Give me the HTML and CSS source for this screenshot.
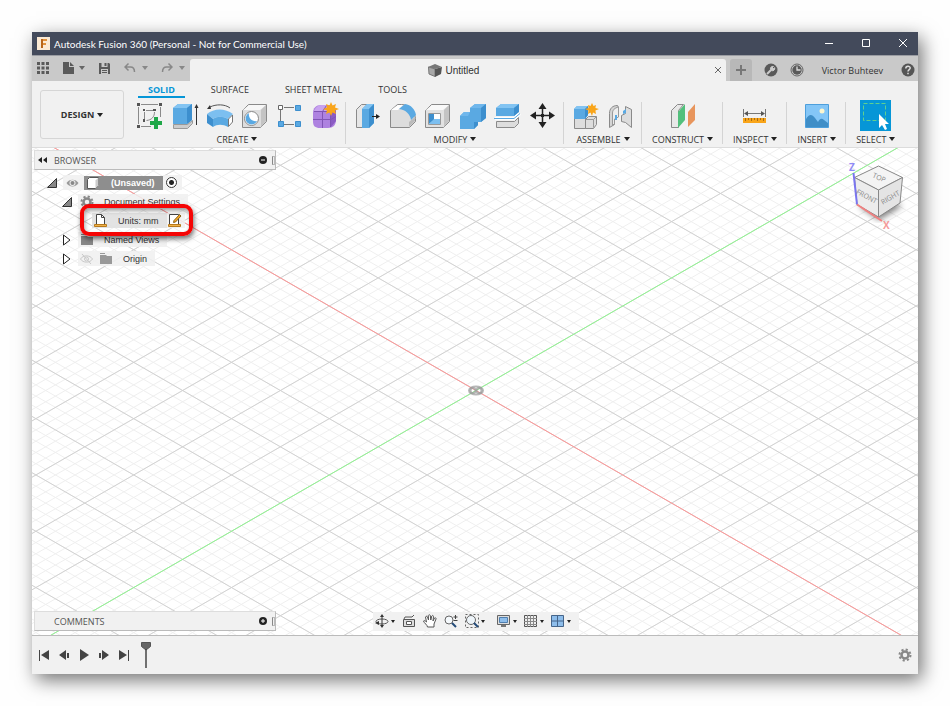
FILE: index.html
```html
<!DOCTYPE html>
<html lang="en">
<head>
    <meta charset="UTF-8">
    <meta name="viewport" content="width=device-width, initial-scale=1.0">
    <title>Autodesk Fusion 360</title>
    <link rel="stylesheet" href="styles.css">
</head>
<body>
<div class="window">
    <header class="titlebar">
        <svg width="13" height="13" viewBox="0 0 13 13"><rect width="13" height="13" fill="#fbe9d3"/><path d="M4 2h6v2H6v2h3v2H6v3H4z" fill="#e0913c"/><path d="M4 2h2v9H4z" fill="#b8651a"/></svg>
        <span class="titlebar-text">Autodesk Fusion 360 (Personal - Not for Commercial Use)</span>
        <div class="window-controls">
            <button aria-label="Minimize"><svg width="10" height="10" viewBox="0 0 10 10"><path d="M1 4.500h8" stroke="#fff" fill="none"/></svg></button>
            <button aria-label="Maximize"><svg width="10" height="10" viewBox="0 0 10 10"><path d="M1.500 .5h7v7h-7z" stroke="#fff" fill="none"/></svg></button>
            <button aria-label="Close"><svg width="10" height="10" viewBox="0 0 10 10"><path d="M1 0l8 8M9 0l-8 8" stroke="#fff" fill="none"/></svg></button>
        </div>
    </header>

    <div class="appbar">
        <div class="quick-access">
            <button aria-label="Data panel"><svg width="12" height="12" viewBox="0 0 12 12" fill="#5a5a5a"><path d="M0 0h3v3H0zM4.500 0h3v3h-3zM9 0h3v3H9zM0 4.500h3v3H0zM4.500 4.500h3v3h-3zM9 4.500h3v3H9zM0 9h3v3H0zM4.500 9h3v3h-3zM9 9h3v3H9z"/></svg></button>
            <button aria-label="File"><svg width="12" height="14" viewBox="0 0 12 14" fill="#5a5a5a"><path d="M1 1h6v5h5v7H1z"/><path d="M8 1l4 4H8z"/></svg><i class="caret dim"></i></button>
            <button aria-label="Save"><svg width="13" height="13" viewBox="0 0 13 13"><path d="M1 1h10l1 1v10H1z" fill="#5a5a5a"/><path d="M3.500 1h6v4h-6zM3 7h7v5H3z" fill="#c9c9c9"/><path d="M6.500 1h2v3h-2zM4 8h5v1H4zM4 10h5v1H4z" fill="#5a5a5a"/></svg></button>
            <button aria-label="Undo"><svg width="12" height="12" viewBox="0 0 12 12" fill="none" stroke="#888" stroke-width="1.500"><path d="M4.500 1.500L1 5l3.500 3.500M1 5h5.500c3 0 4 2 4 5"/></svg><i class="caret off"></i></button>
            <button aria-label="Redo"><svg width="12" height="12" viewBox="0 0 12 12" fill="none" stroke="#888" stroke-width="1.500"><path d="M7.500 1.500L11 5 7.500 8.500M11 5H5.500c-3 0-4 2-4 5"/></svg><i class="caret off"></i></button>
        </div>
        <div class="doc-tab">
            <div class="doc-name">
                <svg width="14" height="13" viewBox="0 0 14 13"><path d="M0 3l7-3 7 3-7 2z" fill="#777"/><path d="M.5 3L7 5v7.500L1 10z" fill="#a8a8a8" stroke="#777"/><path d="M7 5l7-2-1 7-6 3z" fill="#555"/></svg>
                <span>Untitled</span>
            </div>
            <button aria-label="Close tab"><svg width="8" height="8" viewBox="0 0 8 8"><path d="M1 1l6 6M7 1L1 7" stroke="#666"/></svg></button>
        </div>
        <div class="account">
            <button class="new-tab" aria-label="New tab"><svg width="12" height="12" viewBox="0 0 12 12"><path d="M6 1v10M1 6h10" stroke="#777" stroke-width="2"/></svg></button>
            <button aria-label="Extensions"><svg width="14" height="14" viewBox="0 0 14 14"><circle cx="7" cy="7" r="6.500" fill="#5a5a5a"/><path d="M3 11l4-4" stroke="#ccc" stroke-width="2"/><path d="M6.500 6.500c-.5-2 1-3.500 3-3L8 5l1 1 1.700-1.300c.5 2-1.200 3.500-3 3z" fill="#ccc" stroke="#ccc"/></svg></button>
            <button aria-label="Job status"><svg width="14" height="14" viewBox="0 0 14 14"><circle cx="7" cy="7" r="6" fill="none" stroke="#666"/><circle cx="7" cy="7" r="4.700" fill="#5a5a5a"/><path d="M7 3.500V7h3.500" stroke="#ddd" fill="none" stroke-width="1.300"/></svg></button>
            <a href="#" class="user">Victor Buhteev</a>
            <button aria-label="Help"><svg width="14" height="14" viewBox="0 0 14 14"><circle cx="7" cy="7" r="6.500" fill="#555"/><path d="M4.800 5.500c0-3 4.400-2.800 4.400-.4C9.200 6.600 7 6.600 7 8.500M7 9.700v1.500" stroke="#ddd" stroke-width="1.500" fill="none"/></svg></button>
        </div>
    </div>

    <div class="ribbon">
        <button class="workspace">DESIGN<i class="caret"></i></button>
        <div class="ribbon-main">
            <nav class="tabs">
                <a href="#" class="active">SOLID</a>
                <a href="#">SURFACE</a>
                <a href="#">SHEET METAL</a>
                <a href="#">TOOLS</a>
            </nav>
            <div class="groups">
                <div class="group">
                    <div class="tools">
                        <button aria-label="Create Sketch"><svg width="28" height="28" viewBox="0 0 28 28"><g fill="none" stroke="#8a8a8a"><path d="M5 2.500h17M2.500 5v17M24.500 5v10M5 24.500h10"/><path d="M10 8.500h7M8.500 10v7M18.500 10c0 5-3 8-8 8.500"/></g><path d="M1 1h3v3H1zM23 1h3v3h-3zM1 23h3v3H1zM7 7h2v2H7zM17 7h3v2h-3zM7 17h2v3H7z" fill="#555"/><path d="M18 15h4v4h4v4h-4v4h-4v-4h-4v-4h4z" fill="#1fa748"/></svg></button>
                        <button aria-label="Extrude"><svg width="28" height="28" viewBox="0 0 28 28"><path d="M2.500 22.500h14l5-4v3l-5 5h-14z" fill="#ccc" stroke="#999"/><path d="M2 6l5-4h14v16l-5 4H2z" fill="#5aa9e2"/><path d="M2 6l5-4h14l-5 4z" fill="#83c4f2"/><path d="M16 6l5-4v16l-5 4z" fill="#3d8fce"/><path d="M25.500 23V4" stroke="#333"/><path d="M23.500 6l2-4 2 4z" fill="#333"/></svg></button>
                        <button aria-label="Revolve"><svg width="28" height="28" viewBox="0 0 28 28"><path d="M1 12C8 6 19 6 27 12l-5 5c-5-3-11-3-15 0z" fill="#7cbff0"/><path d="M1 12l6 5v8l-6-4z" fill="#3d8fce"/><path d="M7 17c4-3 10-3 15 0v8c-5-3-11-3-15 0z" fill="#5aa9e2"/><path d="M22.500 17l4-4v7l-4 4.500z" fill="#fff" stroke="#777"/><path d="M4 5c6-3 15-3 20 1" stroke="#555" fill="none"/><path d="M1 7l3-4 1 4z" fill="#333"/></svg></button>
                        <button aria-label="Hole"><svg width="28" height="28" viewBox="0 0 28 28"><path d="M1.500 8.500l6-6h18v17l-6 6h-18z" fill="#ddd" stroke="#8a8a8a"/><path d="M2 8l6-5h17l-6 5z" fill="#f7f7f7"/><path d="M20 8l5-5v16l-5 6z" fill="#c4c4c4"/><circle cx="10.500" cy="16.500" r="7" fill="#fff" stroke="#888"/><path d="M8 11a6 6 0 1 0 8 8C11 20 7 16 8 11z" fill="#5aa9e2"/></svg></button>
                        <button aria-label="Rectangular Pattern"><svg width="28" height="28" viewBox="0 0 28 28"><path d="M4.500 8v12M8 5.500h10M8 22.500h10" stroke="#777" fill="none"/><path d="M2.500 3.500h4v4h-4z" fill="#fff" stroke="#666"/><path d="M19.500 3.500h5v5h-5zM2.500 19.500h5v5h-5zM19.500 19.500h5v5h-5z" fill="#5aa9e2" stroke="#3d8fce"/></svg></button>
                        <button aria-label="Create Form"><svg width="28" height="28" viewBox="0 0 28 28"><path d="M2 11c0-5 3-8 8-8h8c5 0 7 3 7 8v7c0 5-3 8-8 8H9c-5 0-7-2-7-7z" fill="#ae82e0"/><path d="M3 9c2-5 5-6 9-6h6l2 5-6 2z" fill="#c8a3ef"/><path d="M20 10l5-2v11l-5 6z" fill="#8b5cc4"/><path d="M11.500 9v17M2 17.500h18l5-3M3 9.500h16.500V25M11.500 9.500l4-6" stroke="#8055b5" fill="none"/><path d="M20 0l1.500 3.500L25 2l-1 3.500 4 1.500-4 1.500L25 12l-3.500-1.500L20 14l-1.500-3.500L15 12l1-3.500L12 7l4-1.500L15 2l3.500 1.500z" fill="#f9a51a"/></svg></button>
                    </div>
                    <button class="group-name">CREATE<i class="caret"></i></button>
                </div>
                <div class="group">
                    <div class="tools">
                        <button aria-label="Press Pull"><svg width="28" height="28" viewBox="0 0 28 28"><path d="M2.500 7.500l5-5h6v22l-2 1h-9z" fill="#e6e6e6" stroke="#8a8a8a"/><path d="M8 7l5-5h7v19l-5 5H8z" fill="#5aa9e2"/><path d="M8 7l5-5h7l-5 5z" fill="#83c4f2"/><path d="M15 7l5-5v19l-5 5z" fill="#3d8fce"/><path d="M18 14.500h5" stroke="#222"/><path d="M22 12l4 2.500-4 2.500z" fill="#222"/></svg></button>
                        <button aria-label="Fillet"><svg width="28" height="28" viewBox="0 0 28 28"><path d="M1.500 8.500l7-6h4c8 0 13 6 14 14v3l-6 6h-19z" fill="#ddd" stroke="#8a8a8a"/><path d="M2 8l7-5h5l-5 5z" fill="#fff"/><path d="M20 20l6-5v4l-6 6z" fill="#bbb"/><path d="M10 7l6-5c6 1 10 5 11 11l-5 5C21 12 17 8 10 7z" fill="#5aa9e2"/></svg></button>
                        <button aria-label="Shell"><svg width="28" height="28" viewBox="0 0 28 28"><path d="M1.500 8.500l6-6h18v17l-6 6h-18z" fill="#e2e2e2" stroke="#8a8a8a"/><path d="M2 8l6-5h17l-6 5z" fill="#f9f9f9"/><path d="M20 8l5-5v16l-5 6z" fill="#c4c4c4"/><path d="M4.500 11.500h12v11h-12z" fill="#fff" stroke="#999"/><path d="M5 12h5v6l-5 4z" fill="#3d8fce"/><path d="M5 22l5-5h6v5z" fill="#7cbff0"/></svg></button>
                        <button aria-label="Combine"><svg width="28" height="28" viewBox="0 0 28 28"><path d="M1 14l4-4h6V6l5-4h11v14l-5 4h-3v3l-4 4H1z" fill="#5aa9e2"/><path d="M11 6l5-4h11l-5 4zM1 14l4-4h6l-2 4z" fill="#70b7ec"/><path d="M22 6l5-4v14l-5 4zM15 20h4v3l-4 4z" fill="#3d8fce"/></svg></button>
                        <button aria-label="Split Body"><svg width="28" height="28" viewBox="0 0 28 28"><path d="M2.500 19.500h18l4-4v6l-4 4h-18z" fill="#ddd" stroke="#8a8a8a"/><path d="M2 6l5-4h18v8l-5 4H2z" fill="#5aa9e2"/><path d="M2 6l5-4h18l-5 4z" fill="#83c4f2"/><path d="M20 6l5-4v8l-5 4z" fill="#3d8fce"/><path d="M1 16.500h19l6-5" stroke="#fff" fill="none" stroke-width="3"/><path d="M0 16.500h20l6-5" stroke="#5aa9e2" fill="none"/></svg></button>
                        <button aria-label="Move"><svg width="28" height="28" viewBox="0 0 28 28"><path d="M13.500 5v18M5 13.500h18" stroke="#222" stroke-width="1.500"/><path d="M13.500 1l4 6h-8zM13.500 26l4-6h-8zM1 13.500l6-4v8zM26 13.500l-6-4v8zM12 12h3v3h-3z" fill="#222"/></svg></button>
                    </div>
                    <button class="group-name">MODIFY<i class="caret"></i></button>
                </div>
                <div class="group">
                    <div class="tools">
                        <button aria-label="New Component"><svg width="28" height="28" viewBox="0 0 28 28"><path d="M2.500 15.500h11v11h-11zM13.500 17.500l3-3h8v8l-3 4h-8z" fill="#ddd" stroke="#8a8a8a"/><path d="M13.500 17.500h8l3-3M21.500 17.500v8" stroke="#999" fill="none"/><path d="M2 7l3-3h11v9l-3 4H2z" fill="#5aa9e2"/><path d="M2 7l3-3h11l-3 3z" fill="#83c4f2"/><path d="M13 7l3-3v9l-3 4z" fill="#3d8fce"/><path d="M20 1l1.500 3L24 3l-.6 3 3.600 1-3.600 1.500L24 12l-3-1.500L20 14l-1.500-3.500L16 12l.5-3.500L13 7l3.500-1L16 3l2.500 1z" fill="#f9a51a"/></svg></button>
                        <button aria-label="Joint"><svg width="28" height="28" viewBox="0 0 28 28"><path d="M2.500 11.500c0-5 3-8 8-8l1 2v9l-4 3v5l-5 3z" fill="#d5d5d5" stroke="#8a8a8a"/><path d="M5.500 11c0-3 2-5 6-6v10l-4 2v5l-2 1z" fill="#eee" stroke="#999"/><path d="M24.500 25.500v-18l-6-3v7l-4 2v6l4 1z" fill="#ddd" stroke="#8a8a8a"/><path d="M8 13h2v5H8zM16 9l3-2v4l-3 1z" fill="#5aa9e2"/></svg></button>
                    </div>
                    <button class="group-name">ASSEMBLE<i class="caret"></i></button>
                </div>
                <div class="group">
                    <div class="tools">
                        <button aria-label="Offset Plane"><svg width="28" height="28" viewBox="0 0 28 28"><path d="M2.500 8.500l6-6h6l-5 6v17h-7z" fill="#e8e8e8" stroke="#8a8a8a"/><path d="M9 10l7-8v16l-7 8z" fill="#52c07c"/><path d="M19 10l7-8v16l-7 7z" fill="#e8955c"/></svg></button>
                    </div>
                    <button class="group-name">CONSTRUCT<i class="caret"></i></button>
                </div>
                <div class="group">
                    <div class="tools">
                        <button aria-label="Measure"><svg width="28" height="28" viewBox="0 0 28 28"><path d="M2.500 7v8M24.500 7v8M5 11.500h18" stroke="#777"/><path d="M3 11.500l4-2.500v5zM24 11.500L20 9v5z" fill="#555"/><path d="M2 16h23v5H2z" fill="#f9a51a"/><path d="M4.500 16v3M7.500 16v2M10.500 16v3M13.500 16v2M16.500 16v3M19.500 16v2M22.500 16v3" stroke="#a56c18"/></svg></button>
                    </div>
                    <button class="group-name">INSPECT<i class="caret"></i></button>
                </div>
                <div class="group">
                    <div class="tools">
                        <button aria-label="Insert Canvas"><svg width="28" height="28" viewBox="0 0 28 28"><path d="M2.500 2.500h23v23h-23z" fill="#84c6f7" stroke="#4d9fdc"/><circle cx="19" cy="9" r="2.500" fill="#fdf6cf"/><path d="M3 17c3-5 6-5 9-1l3 4c2-4 4-4 6-2l4 3v4H3z" fill="#3f8ec7"/></svg></button>
                    </div>
                    <button class="group-name">INSERT<i class="caret"></i></button>
                </div>
                <div class="group last">
                    <div class="tools">
                        <button class="selected" aria-label="Select"><svg width="31" height="31" viewBox="0 0 31 31"><path d="M3.500 3.500h22v17h-22z" fill="none" stroke="#5fd08f" stroke-dasharray="4 2"/><path d="M19 14v14l3-3 3 5 2-1-2-5h4z" fill="#fff"/></svg></button>
                    </div>
                    <button class="group-name">SELECT<i class="caret"></i></button>
                </div>
            </div>
        </div>
    </div>

    <main class="viewport" id="viewport">
        <svg class="grid" id="grid">
            <path class="minor" id="minorLines"/>
            <path class="major" id="majorLines"/>
            <path class="axis-x" id="axisX"/>
            <path class="axis-y" id="axisY"/>
            <g id="origin" fill="none" stroke="#999" stroke-opacity=".7" stroke-width="2"><ellipse rx="7" ry="4"/><circle cx="-3" r="2.500"/><circle cx="3" r="2.500"/></g>
        </svg>

        <section class="browser">
            <div class="panel">
                <svg class="collapse" width="9" height="6" viewBox="0 0 9 6"><path d="M4 0v6L0 3zM9 0v6L5 3z" fill="#222"/></svg>
                <span>BROWSER</span>
                <button aria-label="Hide"><svg width="8" height="8" viewBox="0 0 8 8"><circle cx="4" cy="4" r="4" fill="#222"/><path d="M2 4h4" stroke="#fff"/></svg></button>
                <i class="grip"></i>
            </div>
            <ul class="tree">
                <li>
                    <svg class="arrow" width="10" height="10" viewBox="0 0 10 10"><path d="M9.500 .5v9h-9z" fill="#888" stroke="#333"/></svg>
                    <span class="chip"><svg width="13" height="10" viewBox="0 0 13 10"><path d="M.5 5C3 .5 10 .5 12.500 5 10 9.500 3 9.500 .5 5z" fill="#999"/><circle cx="6.500" cy="5" r="3" fill="#eee"/><circle cx="6.500" cy="5" r="2" fill="#888"/></svg></span>
                    <span class="chip root"><svg width="14" height="14" viewBox="0 0 14 14"><path d="M1.500 3.500l2-2h9v8l-3 3h-8z" fill="#fff" stroke="#555"/><path d="M9.500 4.500l3-3v8l-3 3z" fill="#ccc"/></svg>(Unsaved)</span>
                    <label class="chip active-part"><input type="radio" name="active" aria-label="Activate" checked></label>
                </li>
                <li class="level1">
                    <svg class="arrow" width="10" height="10" viewBox="0 0 10 10"><path d="M9.500 .5v9h-9z" fill="#888" stroke="#333"/></svg>
                    <span class="chip"><svg width="14" height="14" viewBox="0 0 14 14"><circle cx="7" cy="7" r="3.500" fill="none" stroke="#888" stroke-width="2.500"/><circle cx="7" cy="7" r="5.500" fill="none" stroke="#888" stroke-width="2" stroke-dasharray="2.160 2.160"/></svg>Document Settings</span>
                </li>
                <li class="level2">
                    <span class="chip units"><svg width="13" height="15" viewBox="0 0 13 15"><path d="M2.500 1.500h5l3 3v7h-8z" fill="#fff" stroke="#444"/><path d="M7.500 1.500v3h3" stroke="#444" fill="none"/><path d="M.5 11.500h12v2H.5z" fill="#f0b24a" stroke="#b87a1c"/></svg>Units: mm</span>
                    <button class="chip" aria-label="Change units"><svg width="14" height="15" viewBox="0 0 14 15"><path d="M1.500 1.500h9v10h-9z" fill="#fff" stroke="#444"/><path d="M11.500 1.500l1.500 1.500-5.500 6-2 .5.500-2z" fill="#f5a623" stroke="#8a6420"/><path d="M.5 11.500h12v2H.5z" fill="#f0b24a" stroke="#b87a1c"/></svg></button>
                    <span class="marker"></span>
                </li>
                <li class="level1">
                    <svg class="arrow" width="10" height="12" viewBox="0 0 10 12"><path d="M1.500 1v10L8 6z" fill="#fff" stroke="#222"/></svg>
                    <span class="chip"><svg width="14" height="12" viewBox="0 0 14 12"><path d="M1 0h5v1H1zM1 2h6l1 1h5v8H1z" fill="#888"/></svg>Named Views</span>
                </li>
                <li class="level1">
                    <svg class="arrow" width="10" height="12" viewBox="0 0 10 12"><path d="M1.500 1v10L8 6z" fill="#fff" stroke="#222"/></svg>
                    <span class="chip"><svg width="13" height="10" viewBox="0 0 13 10" fill="none" stroke="#c8c8c8"><path d="M.5 5C3 .8 10 .8 12.500 5 10 9.200 3 9.200 .5 5z"/><circle cx="6.500" cy="5" r="2"/><path d="M2 0l9 10"/></svg><svg width="14" height="12" viewBox="0 0 14 12"><path d="M1 0h5v1H1zM1 2h6l1 1h5v8H1z" fill="#999"/></svg>Origin</span>
                </li>
            </ul>
        </section>

        <svg class="viewcube" width="64" height="76" viewBox="0 0 64 76">
            <defs><filter id="soft"><feGaussianBlur stdDeviation="3"/></filter></defs>
            <path d="M13 48l20-12 23 12-23 14z" fill="#000" opacity=".5" filter="url(#soft)"/>
            <path d="M8.500 19.500l24-11.500 24 11.500L32.500 32z" fill="#f4f4f4" stroke="#888"/>
            <path d="M8.500 19.500l24 12.500v27L11 46.500z" fill="#ececec" stroke="#888"/>
            <path d="M32.500 32l24-12.500L54 45 32.500 59z" fill="#e4e4e4" stroke="#888"/>
            <path d="M7.500 15L11 46.500" stroke="#7a75f0" stroke-width="2"/>
            <path d="M11 46.500L36 63" stroke="#f08080" stroke-width="2"/>
            <text class="axis-z-text" x="3" y="13">Z</text>
            <text class="axis-x-text" x="37" y="71">X</text>
            <text class="face" transform="translate(33 20) rotate(24)" text-anchor="middle" y="2">TOP</text>
            <text class="face" transform="translate(21 38) rotate(28)" text-anchor="middle" y="3">FRONT</text>
            <text class="face" transform="translate(44 39) rotate(-30)" text-anchor="middle" y="3">RIGHT</text>
        </svg>

        <div class="bottom">
            <div class="panel comments">
                <span>COMMENTS</span>
                <button aria-label="Add comment"><svg width="8" height="8" viewBox="0 0 8 8"><circle cx="4" cy="4" r="4" fill="#222"/><path d="M2 4h4M4 2v4" stroke="#fff"/></svg></button>
                <i class="grip"></i>
            </div>
            <div class="navbar">
                <button aria-label="Orbit"><svg width="14" height="14" viewBox="0 0 14 14"><ellipse cx="7" cy="7.500" rx="6" ry="2.500" fill="none" stroke="#555"/><path d="M7 2v10" stroke="#333"/><path d="M5 3l2-3 2 3zM5 11l2 3 2-3zM0 9l4-2v4z" fill="#333"/></svg><i class="caret"></i></button>
                <button aria-label="Look At"><svg width="14" height="14" viewBox="0 0 14 14"><path d="M1.500 5.500h11v7h-11z" fill="#ddd" stroke="#555"/><path d="M4.500 7.500h5v3h-5z" fill="#fff" stroke="#555"/><path d="M2 5l1-2h7l2-2" stroke="#555" fill="none"/></svg></button>
                <button aria-label="Pan"><svg width="14" height="14" viewBox="0 0 14 14"><path d="M4.500 13c0-2-3.500-4-4-6 .8-1 2 0 3 1L2.500 3c.5-1 1.500-1 2 0l1 3-.2-4.500c.5-1 1.500-1 2 0L7.800 6l1-4c.7-1 1.700-.5 1.700.5L10 7l1.500-3c1-.6 1.800 0 1.500 1l-2 5v3z" fill="#fff" stroke="#555"/></svg></button>
                <button aria-label="Zoom"><svg width="14" height="14" viewBox="0 0 14 14"><circle cx="5" cy="6" r="4" fill="#f5f9fc" stroke="#666"/><path d="M8 9l4 4" stroke="#234a78" stroke-width="2"/><path d="M11.500 1v4M9.500 3h4M9.500 6.500h4" stroke="#444"/></svg></button>
                <button aria-label="Fit"><svg width="14" height="14" viewBox="0 0 14 14"><path d="M.5 .5h13v13H.5z" fill="none" stroke="#666" stroke-dasharray="2 2"/><circle cx="6" cy="6" r="4.500" fill="#eef5fa" stroke="#666"/><path d="M9 9l4 4" stroke="#234a78" stroke-width="2"/></svg><i class="caret"></i></button>
                <button class="display" aria-label="Display Settings"><svg width="14" height="14" viewBox="0 0 14 14"><path d="M.5 1.500h12v9H.5z" fill="#ddd" stroke="#666"/><path d="M2.500 3.500h8v5h-8z" fill="#8dbdeb" stroke="#4f7eae"/><path d="M4 11h5v2H4z" fill="#777"/></svg><i class="caret"></i></button>
                <button aria-label="Grid and Snaps"><svg width="14" height="14" viewBox="0 0 14 14"><path d="M.5 1.500h12v11H.5z" fill="#eee" stroke="#555"/><path d="M3.500 1v12M6.500 1v12M9.500 1v12M0 4.500h13M0 7.500h13M0 10.500h13" stroke="#888"/></svg><i class="caret"></i></button>
                <button aria-label="Viewports"><svg width="14" height="14" viewBox="0 0 14 14"><path d="M.5 1.500h12v11H.5z" fill="#8dbdeb" stroke="#45658a"/><path d="M6.500 1v12M0 7h13" stroke="#45658a"/></svg><i class="caret"></i></button>
            </div>
        </div>
    </main>

    <footer class="timeline">
        <button aria-label="Go to start"><svg width="12" height="12" viewBox="0 0 12 12" fill="#444"><path d="M1 1h1v11H1zM11 1v10L3 6z"/></svg></button>
        <button aria-label="Step back"><svg width="12" height="12" viewBox="0 0 12 12" fill="#444"><path d="M8 1v10L1 6zM9 4h2v5H9z"/></svg></button>
        <button aria-label="Play"><svg width="12" height="12" viewBox="0 0 12 12" fill="#444"><path d="M2 0v12l9-6z"/></svg></button>
        <button aria-label="Step forward"><svg width="12" height="12" viewBox="0 0 12 12" fill="#444"><path d="M4 1v10l7-5zM1 4h2v5H1z"/></svg></button>
        <button aria-label="Go to end"><svg width="12" height="12" viewBox="0 0 12 12" fill="#444"><path d="M10 1h1v11h-1zM1 1v10l8-5z"/></svg></button>
        <svg class="playhead" width="12" height="26" viewBox="0 0 12 26"><path d="M1.500 .5h9v4L6 8 1.500 4.500z" fill="#666" stroke="#555"/><path d="M6 7v19" stroke="#444" stroke-width="1.500"/></svg>
        <button class="settings" aria-label="Timeline settings"><svg width="14" height="14" viewBox="0 0 14 14"><circle cx="7" cy="7" r="3.500" fill="none" stroke="#888" stroke-width="2.500"/><circle cx="7" cy="7" r="5.500" fill="none" stroke="#888" stroke-width="2" stroke-dasharray="2.160 2.160"/></svg></button>
    </footer>
</div>
<script>
    // half size of one major grid cell
    const cellW = 48.9;
    const cellH = 28.15;

    function gridLines(cx, cy, width, step) {
        const slope = cellH / cellW;
        const half = width / 2 + 10;
        let d = '';
        for (let i = -20 / step; i <= 20 / step; i++) {
            const y = cy + i * step * cellH * 2;
            d += `M${cx - half} ${y - half * slope}L${cx + half} ${y + half * slope}`;
            d += `M${cx - half} ${y + half * slope}L${cx + half} ${y - half * slope}`;
        }
        return d;
    }
    function drawGrid() {
        const view = document.getElementById('viewport');
        const w = view.clientWidth;
        const cx = w / 2 + 1;
        const cy = view.clientHeight / 2 - 1;
        const dy = w * cellH / cellW;
        document.getElementById('minorLines').setAttribute('d', gridLines(cx, cy, w, 0.2));
        document.getElementById('majorLines').setAttribute('d', gridLines(cx, cy, w, 1));
        document.getElementById('axisX').setAttribute('d', `M${cx - w} ${cy - dy}L${cx + w} ${cy + dy}`);
        document.getElementById('axisY').setAttribute('d', `M${cx - w} ${cy + dy}L${cx + w} ${cy - dy}`);
        document.getElementById('origin').setAttribute('transform', `translate(${cx} ${cy})`);
    }
    drawGrid();
    window.addEventListener('resize', drawGrid);
</script>
</body>
</html>
```

FILE: styles.css
```css
* {
    box-sizing: border-box;
}
body {
    margin: 0;
    padding: 32px;
    height: 100vh;
    background: #fefefe;
    font-family: "Open Sans", "Noto Sans", sans-serif;
    font-size: 9px;
    color: #333;
}
button {
    display: flex;
    align-items: center;
    justify-content: center;
    padding: 0;
    border: none;
    background: none;
    font: inherit;
    color: inherit;
}
a {
    color: inherit;
    text-decoration: none;
}
svg {
    display: block;
    flex-shrink: 0;
}
.window {
    display: flex;
    flex-direction: column;
    height: 100%;
    background: #f1f1f1;
    box-shadow: 4px 6px 18px rgba(0, 0, 0, 0.55);
}
.caret {
    border: 3px solid transparent;
    border-top: 4px solid #222;
    border-bottom: none;
    margin-left: 3px;
}
.caret.dim { border-top-color: #666; margin-left: 5px; }
.caret.off { border-top-color: #888; margin-left: 6px; }

/* title bar */
.titlebar {
    display: flex;
    align-items: center;
    height: 23px;
    padding-left: 5px;
    background: #434a5b;
    color: #fff;
    font-family: Lato, sans-serif;
    font-size: 10px;
}
.titlebar-text {
    flex: 1;
    margin-left: 4px;
}
.window-controls {
    display: flex;
    gap: 7px;
}
.window-controls button {
    width: 30px;
    height: 23px;
}

/* quick access + document tab */
.appbar {
    display: flex;
    height: 26px;
    padding-top: 3px;
    background: #c9c9c9;
    border-top: 1px solid #9a9ca2;
}
.quick-access {
    display: flex;
    align-items: center;
    gap: 13px;
    width: 158px;
    padding: 0 0 4px 5px;
}
.doc-tab {
    display: flex;
    flex: 1;
    align-items: center;
    padding: 0 4px;
    background: #f1f1f1;
    border-radius: 3px 3px 0 0;
}
.doc-name {
    display: flex;
    flex: 1;
    align-items: center;
    justify-content: center;
    gap: 3px;
    font-family: "Liberation Sans", sans-serif;
    font-size: 10px;
}
.account {
    display: flex;
    align-items: center;
    gap: 12px;
    padding: 0 3px 0 4px;
}
.new-tab {
    width: 22px;
    height: 100%;
    background: #b8b8b8;
    border-radius: 3px 3px 0 0;
}
.user {
    margin: 0 6px;
}

/* ribbon */
.ribbon {
    display: flex;
    gap: 4px;
    height: 67px;
    padding-left: 8px;
    border-bottom: 1px solid #dcdcdc;
}
.workspace {
    width: 84px;
    height: 49px;
    margin-top: 9px;
    border: 1px solid #d6d6d6;
    border-radius: 3px;
    font-weight: bold;
}
.ribbon-main {
    flex: 1;
}
.tabs {
    display: flex;
    gap: 16px;
    padding-left: 10px;
}
.tabs a {
    height: 17px;
    padding: 0 10px;
    line-height: 18px;
}
.tabs .active {
    color: #0696d7;
    font-weight: bold;
    border-bottom: 2px solid #0696d7;
}
.groups {
    display: flex;
    margin-top: 2px;
}
.group {
    padding: 0 4px;
    background: linear-gradient(#d4d4d4, #d4d4d4) right 2px / 1px 42px no-repeat;
}
.group.last {
    background: none;
}
.tools {
    display: flex;
    justify-content: center;
}
.tools button {
    width: 35px;
    height: 31px;
}
.tools .selected {
    width: 31px;
    background: #0696d7;
}
.group-name {
    width: 100%;
    height: 16px;
    padding: 0 6px;
}

/* viewport */
.viewport {
    position: relative;
    display: flex;
    flex: 1;
    flex-direction: column;
    justify-content: space-between;
    overflow: hidden;
    background: #fff;
}
.grid {
    position: absolute;
    inset: 0;
    width: 100%;
    height: 100%;
    fill: none;
}
.minor { stroke: #efefef; }
.major { stroke: #d2d2d2; }
.axis-x { stroke: #ff9696; }
.axis-y { stroke: #90f790; }
.browser {
    position: relative;
    width: 242px;
    margin: 2px 0 0 2px;
}
.panel {
    display: flex;
    align-items: center;
    width: 242px;
    height: 20px;
    padding: 0 0 0 3px;
    background: #f1f1f1;
    border: 1px solid #ddd;
    border-right-color: #bbb;
    border-bottom-color: #bbb;
    color: #555;
}
.panel span {
    flex: 1;
    margin-left: 7px;
}
.comments span {
    margin-left: 16px;
}
.grip {
    width: 3px;
    height: 9px;
    margin-left: 5px;
    border: 1px solid #bbb;
    border-left-color: #888;
}
.tree {
    margin: 3px 0 0;
    padding: 0 0 0 13px;
    list-style: none;
    font-family: "Liberation Sans", sans-serif;
}
.tree li {
    position: relative;
    display: flex;
    align-items: center;
    height: 19px;
}
.tree .level1 { padding-left: 15px; }
.tree .level2 {
    z-index: 1;
    padding-left: 45px;
}
.arrow {
    margin-right: 6px;
}
.chip {
    display: flex;
    align-items: center;
    height: 15px;
    padding: 0 5px 0 3px;
    background: rgba(240, 240, 240, 0.85);
}
.level1 .chip {
    gap: 10px;
    padding: 0 8px 0 2px;
}
.level1 .chip svg + svg {
    margin-left: -4px;
}
.tree .root {
    gap: 11px;
    padding: 0 8px 0 2px;
    height: 14px;
    background: #8e8e8e;
    color: #fff;
    font-weight: bold;
}
.active-part input {
    appearance: none;
    width: 11px;
    height: 11px;
    margin: 0;
    border: 1px solid #333;
    border-radius: 50%;
    background: radial-gradient(#222 2px, #fff 3px);
}
.tree .units {
    gap: 11px;
    padding: 0 8px 0 2px;
    background: rgba(224, 224, 224, 0.9);
}
.level2 button.chip {
    padding: 0 3px 0 1px;
}
/* callout round the units row */
.marker {
    position: absolute;
    left: 33px;
    top: -7px;
    width: 113px;
    height: 32px;
    border: 4px solid #f50505;
    border-radius: 9px;
    box-shadow: 1px 3px 5px rgba(0, 0, 0, 0.55), inset 1px 3px 4px rgba(0, 0, 0, 0.35);
}
.viewcube {
    position: absolute;
    top: 10px;
    right: 8px;
}
.face {
    fill: #888;
    font-size: 7px;
}
.axis-z-text,
.axis-x-text {
    font-size: 10px;
    font-weight: bold;
}
.axis-z-text { fill: #8f8af5; }
.axis-x-text { fill: #f59a9a; }
.bottom {
    position: relative;
    display: flex;
    align-items: center;
    gap: 97px;
    padding: 0 0 4px 2px;
}
.navbar {
    display: flex;
    align-items: center;
    gap: 7px;
    height: 19px;
    padding: 0 8px 0 2px;
    background: #f1f1f1;
}
.navbar .caret {
    border-width: 3px 2px 0;
    margin-left: 2px;
}
.navbar .display {
    margin-left: 5px;
}

/* timeline */
.timeline {
    display: flex;
    align-items: center;
    gap: 8px;
    height: 39px;
    padding: 0 6px;
    border-top: 1px solid #bbb;
}
.playhead {
    margin-left: 2px;
}
.settings {
    margin-left: auto;
}
```
